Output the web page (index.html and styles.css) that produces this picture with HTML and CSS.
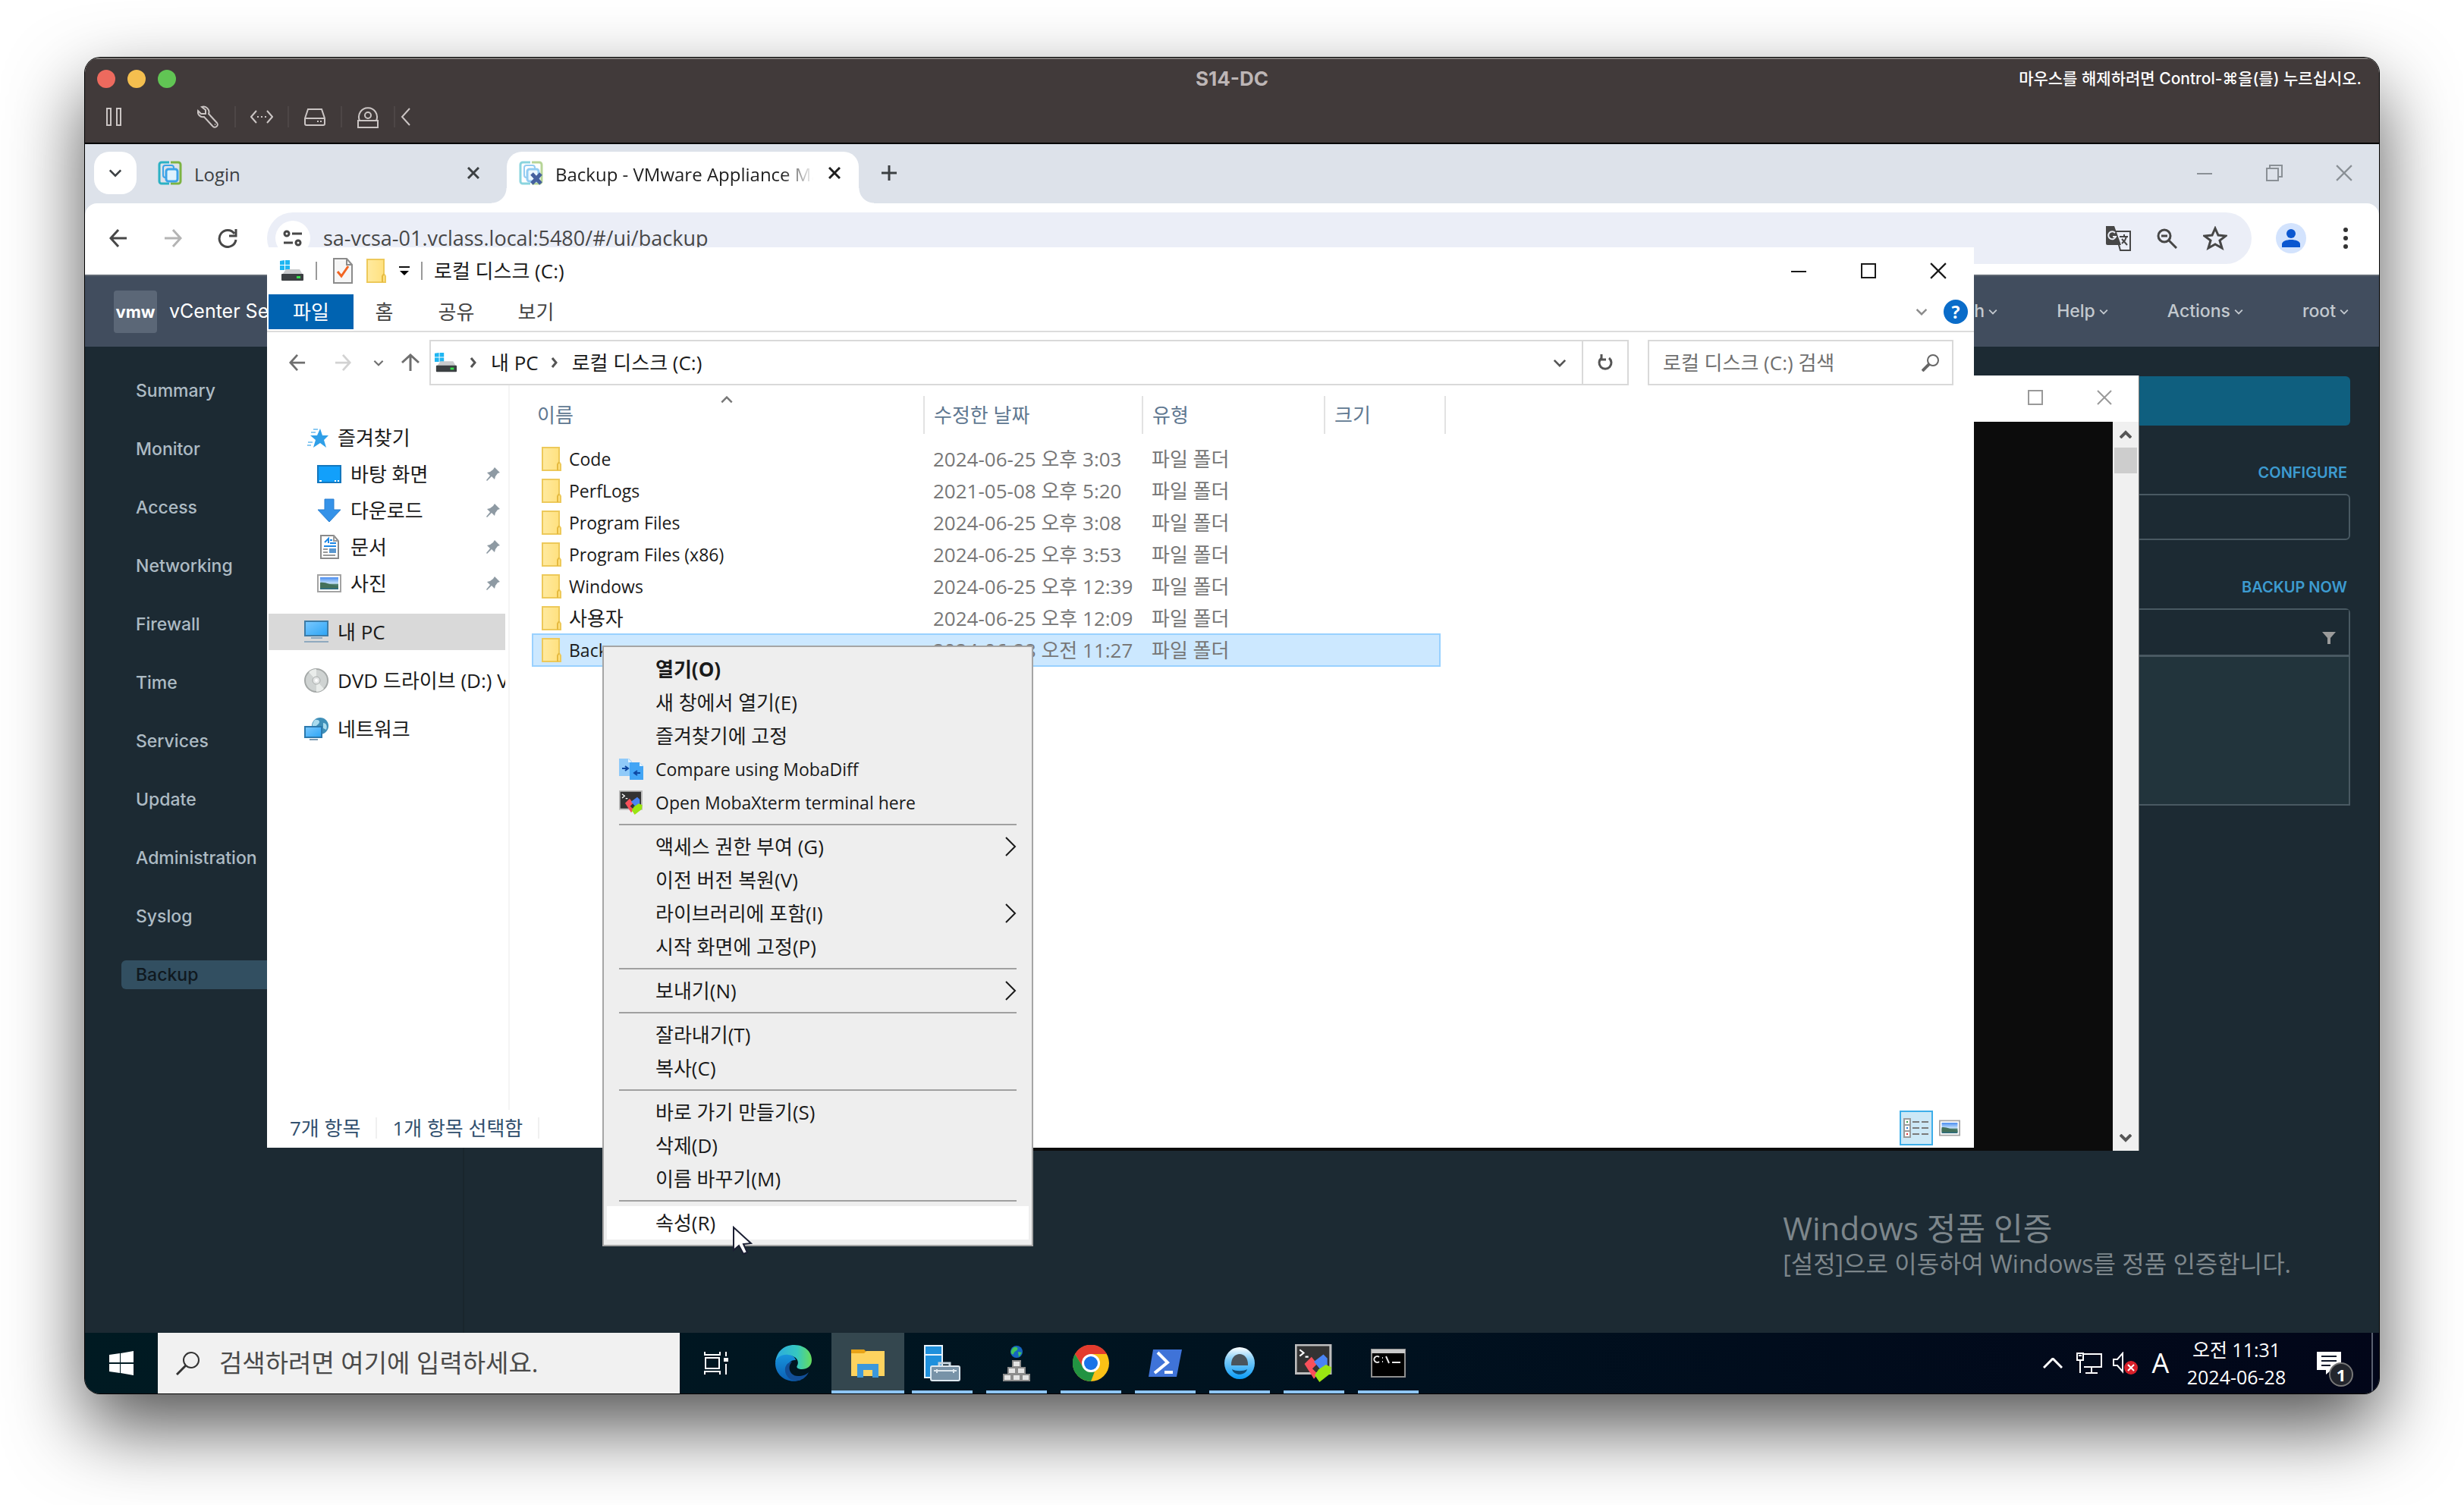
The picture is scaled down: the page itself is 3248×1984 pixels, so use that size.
FILE: index.html
```html
<!DOCTYPE html>
<html lang="ko">
<head>
    <meta charset="UTF-8">
    <meta name="viewport" content="width=device-width, initial-scale=1.0">
    <title>S14-DC</title>
    <link rel="stylesheet" href="styles.css">
</head>
<body>
    <!-- shared icons -->
    <svg class="defs" width="0" height="0" aria-hidden="true">
        <defs>
            <linearGradient id="g-folder" x1="0" y1="0" x2="1" y2="0"><stop offset="0" stop-color="#ffeaa0"/><stop offset="1" stop-color="#ffe07c"/></linearGradient>
            <linearGradient id="g-screen" x1="0" y1="0" x2="1" y2="1"><stop offset="0" stop-color="#7cc9ff"/><stop offset="1" stop-color="#2ba4f5"/></linearGradient>
            <linearGradient id="g-edge" x1="0" y1="0" x2="1" y2="0"><stop offset="0" stop-color="#2aa8e0"/><stop offset=".6" stop-color="#36c8c0"/><stop offset="1" stop-color="#66dc5c"/></linearGradient>
            <linearGradient id="g-edge2" x1="0" y1="0" x2="0" y2="1"><stop offset="0" stop-color="#1793dc"/><stop offset="1" stop-color="#0b5fb4"/></linearGradient>
            <linearGradient id="g-sky" x1="0" y1="0" x2="0" y2="1"><stop offset="0" stop-color="#4a8df0"/><stop offset=".5" stop-color="#c3e0fa"/><stop offset=".6" stop-color="#4f7f6c"/><stop offset="1" stop-color="#2c6a80"/></linearGradient>
            <linearGradient id="g-ring" x1="0" y1="0" x2="0" y2="1"><stop offset="0" stop-color="#ffffff"/><stop offset=".4" stop-color="#7ccbf8"/><stop offset="1" stop-color="#0a9cf8"/></linearGradient>
        </defs>
        <symbol id="close" viewBox="0 0 20 20"><path d="M1 1l18 18M19 1L1 19" fill="none" stroke="currentColor" stroke-width="2"/></symbol>
        <symbol id="tab-close" viewBox="0 0 16 16"><path d="M1 1l14 14M15 1L1 15" fill="none" stroke="currentColor" stroke-width="3"/></symbol>
        <symbol id="min" viewBox="0 0 20 20"><path d="M0 11h20" fill="none" stroke="currentColor" stroke-width="2"/></symbol>
        <symbol id="max" viewBox="0 0 20 20"><path d="M1 1h18v18H1z" fill="none" stroke="currentColor" stroke-width="2"/></symbol>
        <symbol id="down" viewBox="0 0 20 12"><path d="M2 2l8 8 8-8" fill="none" stroke="currentColor" stroke-width="3"/></symbol>
        <symbol id="crumb" viewBox="0 0 8 14"><path d="M1 1l5 6-5 6" fill="none" stroke="currentColor" stroke-width="3"/></symbol>
        <symbol id="next" viewBox="0 0 16 28"><path d="M2 2l12 12L2 26" fill="none" stroke="currentColor" stroke-width="2"/></symbol>
        <symbol id="arrow" viewBox="0 0 24 24"><path d="M23 12H2M12 1L2 12l10 11" fill="none" stroke="currentColor" stroke-width="3"/></symbol>
        <symbol id="search" viewBox="0 0 32 32"><circle cx="20" cy="12" r="10" fill="none" stroke="currentColor" stroke-width="2"/><path d="M13 19L1 31" stroke="currentColor" stroke-width="3"/></symbol>
        <symbol id="folder" viewBox="0 0 26 32"><path d="M1 1h22v19l2 3v8H1z" fill="url(#g-folder)" stroke="#edc95a" stroke-width="2"/><path d="M21 31v-8l2-3" fill="none" stroke="#e5b93f" stroke-width="2"/></symbol>
        <symbol id="drive" viewBox="0 0 32 28"><path d="M0 1l6-1v6H0zM7 0h6v6H7zM0 7h6v6H0zM7 7h6v6H7z" fill="#1fb6f2"/><path d="M8 12h18l4 7H3z" fill="#c9cbcd"/><rect x="2" y="18" width="29" height="9" rx="1" fill="#3b3f42"/><rect x="22" y="21" width="5" height="3" fill="#35e04c"/></symbol>
        <symbol id="vm" viewBox="0 0 32 32"><path d="M15 2H5a3 3 0 00-3 3v22a3 3 0 003 3h10" fill="none" stroke="#2bb1c4" stroke-width="3"/><path d="M17 2h10a3 3 0 013 3v22a3 3 0 01-3 3H17" fill="none" stroke="#7cb342" stroke-width="3"/><rect x="7" y="6" width="14" height="16" rx="3" fill="none" stroke="#3ba3e8" stroke-width="2"/><rect x="11" y="11" width="15" height="16" rx="3" fill="#dff2fd" stroke="#3ba3e8" stroke-width="3"/></symbol>
        <symbol id="pin" viewBox="0 0 20 20"><path d="M12 1l7 7-3 1-3 4-1 4-4-4-6 6-1-1 5-6-4-4 4-1 4-3z" fill="#8e9aa3"/></symbol>
        <symbol id="picture" viewBox="0 0 32 24"><path d="M1 1h30v22H1z" fill="#fff" stroke="#a3a3a3" stroke-width="2"/><path d="M4 4h24v16H4z" fill="url(#g-sky)"/><path d="M4 11c8-1 12 3 24 5v2H4z" fill="#43705a"/></symbol>
        <symbol id="moba" viewBox="0 0 48 48"><path d="M1 1h44v36H1z" fill="#333" stroke="#bdbdbd" stroke-width="3"/><path d="M6 7l5 4-5 4M13 16h4" fill="none" stroke="#fff" stroke-width="2"/><path d="M12 25l9-9 7 9-6 6 7 7-5 6z" fill="#f8505a"/><path d="M24 22l12-9 5 5v9l-9 5z" fill="#4a84f4"/><path d="M30 32l9-6 7 3-1 8-14 11-6-9z" fill="#9be512"/></symbol>
        <symbol id="pc" viewBox="0 0 32 30"><path d="M1 1h30v19H1z" fill="url(#g-screen)" stroke="#3d7ba6" stroke-width="2"/><path d="M9 23h15M0 28h32" stroke="#8fa9bf" stroke-width="2"/></symbol>
    </svg>

    <main class="vm">
        <header class="titlebar">
            <div class="titlebar-row">
                <div class="lights">
                    <button class="light red" aria-label="닫기"></button>
                    <button class="light yellow" aria-label="최소화"></button>
                    <button class="light green" aria-label="전체 화면"></button>
                </div>
                <h1>S14-DC</h1>
                <p class="hint">마우스를 해제하려면 Control-⌘을(를) 누르십시오.</p>
            </div>
            <div class="vm-tools">
                <button class="pause" aria-label="일시 중지"><svg width="20" height="24" viewBox="0 0 20 24"><path d="M1 1h5v22H1zM14 1h5v22h-5z"/></svg></button>
                <button class="tool first" aria-label="설정"><svg width="30" height="30" viewBox="0 0 30 30"><path d="M6 2l5 4v5H5L1 7c-1 5 3 9 8 8l11 12c3 4 9 0 6-4L15 11c2-5-3-11-9-9zM23 25h1"/></svg></button>
                <button class="tool" aria-label="네트워크"><svg width="30" height="18" viewBox="0 0 30 18"><path d="M8 1L1 9l7 8M22 1l7 8-7 8M9 9h2M14 9h2M19 9h2"/></svg></button>
                <button class="tool" aria-label="디스크"><svg width="28" height="24" viewBox="0 0 28 24"><path d="M1 14L5 2h18l4 12v7a2 2 0 01-2 2H3a2 2 0 01-2-2zM1 14h26M17 18h2M21 18h2"/></svg></button>
                <button class="tool" aria-label="CD"><svg width="28" height="30" viewBox="0 0 28 30"><path d="M3 20a12 12 0 1122 0M1 20h26v9H1z"/><circle cx="14" cy="13" r="4"/></svg></button>
                <button class="collapse" aria-label="접기"><svg width="14" height="24" viewBox="0 0 14 24"><path d="M12 1L2 12l10 11"/></svg></button>
            </div>
        </header>

        <div class="guest">
            <section class="chrome">
                <div class="tabstrip">
                    <button class="tab-search" aria-label="탭 검색"><svg width="18" height="12"><use href="#down"/></svg></button>
                    <div class="tab">
                        <svg width="32" height="32"><use href="#vm"/></svg>
                        <span>Login</span>
                        <button aria-label="탭 닫기"><svg width="16" height="16"><use href="#tab-close"/></svg></button>
                    </div>
                    <div class="tab active">
                        <svg width="32" height="32" viewBox="0 0 32 32"><g opacity=".55"><use href="#vm" width="32" height="32"/></g><path d="M17 17l12 13M29 17L17 30" stroke="#46619e" stroke-width="5"/></svg>
                        <span>Backup - VMware Appliance Management</span>
                        <button aria-label="탭 닫기"><svg width="16" height="16"><use href="#tab-close"/></svg></button>
                    </div>
                    <button class="new-tab" aria-label="새 탭"><svg width="22" height="22" viewBox="0 0 22 22"><path d="M11 1v20M1 11h20" stroke="currentColor" stroke-width="3"/></svg></button>
                    <div class="win-controls">
                        <button aria-label="최소화"><svg width="20" height="20"><use href="#min"/></svg></button>
                        <button aria-label="이전 크기로"><svg width="22" height="22" viewBox="0 0 22 22"><path d="M1 5h15v16H1zM5 5V1h16v15h-5" fill="none" stroke="currentColor" stroke-width="2"/></svg></button>
                        <button aria-label="닫기"><svg width="22" height="22"><use href="#close"/></svg></button>
                    </div>
                </div>

                <div class="toolbar">
                    <button aria-label="뒤로"><svg width="24" height="24"><use href="#arrow"/></svg></button>
                    <button class="off flip" aria-label="앞으로"><svg width="24" height="24"><use href="#arrow"/></svg></button>
                    <button aria-label="새로고침"><svg width="26" height="26" viewBox="0 0 26 26"><path d="M22 7a11 11 0 102 8M24 1v9h-9" fill="none" stroke="currentColor" stroke-width="3"/></svg></button>
                    <div class="omnibox">
                        <button class="site-info" aria-label="사이트 정보"><svg width="26" height="24" viewBox="0 0 26 24" fill="none" stroke="currentColor" stroke-width="3"><circle cx="5" cy="6" r="3"/><path d="M12 6h13M1 18h12"/><circle cx="20" cy="18" r="3"/></svg></button>
                        <input type="text" aria-label="주소" value="sa-vcsa-01.vclass.local:5480/#/ui/backup">
                        <button class="omni-icon" aria-label="번역"><svg width="34" height="34" viewBox="0 0 34 34"><path d="M13 8h20v25H20z" fill="none" stroke="#474747" stroke-width="2"/><path d="M1 1h11l9 25H3a2 2 0 01-2-2z" fill="#474747"/><path d="M13 10a5 5 0 101 5h-4" fill="none" stroke="#ebeef7" stroke-width="2"/><path d="M19 15h11M25 12v3M28 15c-1 5-4 7-6 9M22 18l7 8" fill="none" stroke="#474747" stroke-width="2"/></svg></button>
                        <button class="omni-icon" aria-label="축소"><svg width="28" height="28" viewBox="0 0 28 28" fill="none" stroke="currentColor" stroke-width="3"><circle cx="11" cy="11" r="8"/><path d="M17 17l10 10M7 11h8"/></svg></button>
                        <button class="omni-icon" aria-label="북마크"><svg width="32" height="32" viewBox="0 0 32 32"><path d="M16 3l4 9 10 1-8 6 3 10-9-5-9 5 3-10-8-6 10-1z" fill="none" stroke="currentColor" stroke-width="3"/></svg></button>
                    </div>
                    <button aria-label="프로필"><svg width="40" height="40" viewBox="0 0 40 40"><circle cx="20" cy="20" r="20" fill="#d3e3fd"/><circle cx="20" cy="14" r="6" fill="#0b57d0"/><path d="M8 32v-4c0-8 24-8 24 0v4z" fill="#0b57d0"/></svg></button>
                    <button aria-label="메뉴"><svg width="8" height="30" viewBox="0 0 8 30" fill="#333"><circle cx="4" cy="4" r="3"/><circle cx="4" cy="15" r="3"/><circle cx="4" cy="26" r="3"/></svg></button>
                </div>

                <div class="appliance">
                    <header class="vc-header">
                        <span class="logo">vmw</span>
                        <span class="product">vCenter Server</span>
                        <nav class="vc-menus">
                            <button>English<svg width="12" height="8"><use href="#down"/></svg></button>
                            <button>Help<svg width="12" height="8"><use href="#down"/></svg></button>
                            <button>Actions<svg width="12" height="8"><use href="#down"/></svg></button>
                            <button>root<svg width="12" height="8"><use href="#down"/></svg></button>
                        </nav>
                    </header>
                    <div class="vc-body">
                        <nav class="vc-nav">
                            <a href="#">Summary</a>
                            <a href="#">Monitor</a>
                            <a href="#">Access</a>
                            <a href="#">Networking</a>
                            <a href="#">Firewall</a>
                            <a href="#">Time</a>
                            <a href="#">Services</a>
                            <a href="#">Update</a>
                            <a href="#">Administration</a>
                            <a href="#">Syslog</a>
                            <a href="#" class="current">Backup</a>
                        </nav>
                        <section class="vc-content">
                            <div class="banner"></div>
                            <a href="#" class="action">CONFIGURE</a>
                            <div class="schedule"></div>
                            <a href="#" class="action">BACKUP NOW</a>
                            <div class="activity">
                                <div class="activity-head"><svg width="18" height="16" viewBox="0 0 18 16"><path d="M0 0h18l-7 8v8H7V8z" fill="#9b9b9b"/></svg></div>
                            </div>
                        </section>
                    </div>
                </div>
            </section>

            <div class="watermark">
                <p class="wm-title">Windows 정품 인증</p>
                <p>[설정]으로 이동하여 Windows를 정품 인증합니다.</p>
            </div>

            <section class="console">
                <div class="console-title">
                    <button aria-label="최대화"><svg width="20" height="20"><use href="#max"/></svg></button>
                    <button aria-label="닫기"><svg width="20" height="20"><use href="#close"/></svg></button>
                </div>
                <div class="console-body">
                    <div class="scrollbar">
                        <svg width="16" height="12" class="up" viewBox="0 0 16 12"><path d="M1 1l7 7 7-7" fill="none" stroke="currentColor" stroke-width="4"/></svg>
                        <div class="thumb"></div>
                        <svg width="16" height="12" class="dn" viewBox="0 0 16 12"><path d="M1 1l7 7 7-7" fill="none" stroke="currentColor" stroke-width="4"/></svg>
                    </div>
                </div>
            </section>

            <section class="explorer">
                <header class="ex-title">
                    <svg width="32" height="28"><use href="#drive"/></svg>
                    <i></i>
                    <svg class="qa" width="26" height="34" viewBox="0 0 26 34"><path d="M1 1h17l7 8v24H1z" fill="#f6f6f6" stroke="#8b8b8b" stroke-width="2"/><path d="M18 1v8h7" fill="none" stroke="#8b8b8b" stroke-width="2"/><path d="M6 18l5 6 9-13" fill="none" stroke="#f26522" stroke-width="3"/></svg>
                    <svg width="26" height="32"><use href="#folder"/></svg>
                    <svg width="14" height="12" viewBox="0 0 14 12"><path d="M0 1h14" stroke="#111" stroke-width="2"/><path d="M1 6h12l-6 6z"/></svg>
                    <i></i>
                    <h2>로컬 디스크 (C:)</h2>
                    <div class="win-controls">
                        <button aria-label="최소화"><svg width="20" height="20"><use href="#min"/></svg></button>
                        <button aria-label="최대화"><svg width="20" height="20"><use href="#max"/></svg></button>
                        <button aria-label="닫기"><svg width="22" height="22"><use href="#close"/></svg></button>
                    </div>
                </header>
                <div class="ribbon">
                    <button class="file">파일</button>
                    <button>홈</button>
                    <button>공유</button>
                    <button>보기</button>
                    <span class="ribbon-right">
                        <svg width="16" height="10"><use href="#down"/></svg>
                        <button class="help">?</button>
                    </span>
                </div>
                <div class="address">
                    <button class="nav-btn" aria-label="뒤로"><svg width="24" height="22"><use href="#arrow"/></svg></button>
                    <button class="nav-btn off flip" aria-label="앞으로"><svg width="24" height="22"><use href="#arrow"/></svg></button>
                    <button class="nav-btn recent" aria-label="최근 위치"><svg width="14" height="9"><use href="#down"/></svg></button>
                    <button class="nav-btn up" aria-label="위로"><svg width="24" height="24"><use href="#arrow"/></svg></button>
                    <div class="path">
                        <svg width="30" height="28"><use href="#drive"/></svg>
                        <svg class="crumb" width="8" height="14"><use href="#crumb"/></svg>
                        <span>내 PC</span>
                        <svg class="crumb" width="8" height="14"><use href="#crumb"/></svg>
                        <span>로컬 디스크 (C:)</span>
                        <button class="path-drop" aria-label="이전 위치"><svg width="18" height="11"><use href="#down"/></svg></button>
                        <button class="refresh" aria-label="새로 고침"><svg width="24" height="22" viewBox="0 0 24 22"><path d="M7 5a8 8 0 1010 0M7 0v7h6" fill="none" stroke="currentColor" stroke-width="3"/></svg></button>
                    </div>
                    <div class="ex-search">
                        <input type="text" aria-label="검색" placeholder="로컬 디스크 (C:) 검색">
                        <svg width="24" height="24" viewBox="0 0 24 24"><circle cx="15" cy="9" r="7" fill="none" stroke="currentColor" stroke-width="2"/><path d="M10 14l-9 9" stroke="currentColor" stroke-width="4"/></svg>
                    </div>
                </div>

                <div class="ex-body">
                    <nav class="tree">
                        <a href="#"><svg width="28" height="28" viewBox="0 0 28 28"><path d="M17 2l3 9h8l-6 6 3 10-8-6-9 6 3-10-7-6h9z" fill="#2f9fe8"/><path d="M8 3h6M5 7h6M1 20h6M0 24h5" stroke="#8ccaf2" stroke-width="2"/></svg>즐겨찾기</a>
                        <a href="#" class="sub"><svg width="32" height="24" viewBox="0 0 32 24"><path d="M1 1h30v22H1z" fill="#12a0fb" stroke="#1477bd" stroke-width="2"/><path d="M3 21h3M23 21h2M27 21h2" stroke="#fff" stroke-width="2"/></svg>바탕 화면<svg class="pin" width="20" height="20"><use href="#pin"/></svg></a>
                        <a href="#" class="sub"><svg width="32" height="32" viewBox="0 0 32 32"><path d="M10 1h12v14h9L16 31 1 15h9z" fill="#3592e8" stroke="#2a7fd0"/></svg>다운로드<svg class="pin" width="20" height="20"><use href="#pin"/></svg></a>
                        <a href="#" class="sub"><svg width="32" height="32" viewBox="0 0 32 32"><path d="M5 1h17l6 7v23H5z" fill="#fff" stroke="#8a8a8a" stroke-width="2"/><path d="M22 1v7h6M8 19h6M8 23h6M8 27h16" fill="none" stroke="#9a9a9a" stroke-width="2"/><path d="M9 15h16M10 10l5-5v6M17 7h3M17 11h8" fill="none" stroke="#1e88e5" stroke-width="2"/><path d="M16 18h9v6h-9z" fill="#5a97cf"/></svg>문서<svg class="pin" width="20" height="20"><use href="#pin"/></svg></a>
                        <a href="#" class="sub"><svg width="32" height="24"><use href="#picture"/></svg>사진<svg class="pin" width="20" height="20"><use href="#pin"/></svg></a>
                        <a href="#" class="root here"><svg width="32" height="30"><use href="#pc"/></svg>내 PC</a>
                        <a href="#" class="root"><svg width="32" height="32" viewBox="0 0 32 32"><circle cx="16" cy="16" r="15" fill="#cfd3d2" stroke="#a4a8a7" stroke-width="2"/><path d="M16 16L6 5a15 15 0 0110-4zM16 16l10 11a15 15 0 01-10 4z" fill="#e9ecea"/><circle cx="16" cy="16" r="5" fill="#e4e6e6" stroke="#a8acab"/><circle cx="16" cy="16" r="2" fill="#fff"/></svg>DVD 드라이브 (D:) VMware Tools</a>
                        <a href="#" class="root"><svg width="32" height="32" viewBox="0 0 32 32"><circle cx="21" cy="12" r="11" fill="#3f8fb8"/><path d="M14 4c6-1 8 3 4 6s-3 5-6 4 0-8 2-10zM25 8c4 0 6 4 4 9l-4-2z" fill="#a9dbee"/><path d="M1 13h22v14H1z" fill="url(#g-screen)" stroke="#2c79ad" stroke-width="2"/><path d="M7 30h11" stroke="#7f9cb3" stroke-width="2"/></svg>네트워크</a>
                    </nav>
                    <div class="files">
                        <table>
                            <colgroup><col class="c-name"><col class="c-date"><col class="c-type"><col class="c-size"></colgroup>
                            <thead>
                                <tr>
                                    <th>이름<svg class="sort" width="18" height="10"><use href="#down"/></svg></th>
                                    <th>수정한 날짜</th>
                                    <th>유형</th>
                                    <th>크기</th>
                                </tr>
                            </thead>
                            <tbody>
                                <tr><td><svg width="26" height="32"><use href="#folder"/></svg><span class="latin">Code</span></td><td>2024-06-25 오후 3:03</td><td>파일 폴더</td><td></td></tr>
                                <tr><td><svg width="26" height="32"><use href="#folder"/></svg><span class="latin">PerfLogs</span></td><td>2021-05-08 오후 5:20</td><td>파일 폴더</td><td></td></tr>
                                <tr><td><svg width="26" height="32"><use href="#folder"/></svg><span class="latin">Program Files</span></td><td>2024-06-25 오후 3:08</td><td>파일 폴더</td><td></td></tr>
                                <tr><td><svg width="26" height="32"><use href="#folder"/></svg><span class="latin">Program Files (x86)</span></td><td>2024-06-25 오후 3:53</td><td>파일 폴더</td><td></td></tr>
                                <tr><td><svg width="26" height="32"><use href="#folder"/></svg><span class="latin">Windows</span></td><td>2024-06-25 오후 12:39</td><td>파일 폴더</td><td></td></tr>
                                <tr><td><svg width="26" height="32"><use href="#folder"/></svg>사용자</td><td>2024-06-25 오후 12:09</td><td>파일 폴더</td><td></td></tr>
                                <tr class="selected"><td><svg width="26" height="32"><use href="#folder"/></svg><span class="latin">Backup</span></td><td>2024-06-28 오전 11:27</td><td>파일 폴더</td><td></td></tr>
                            </tbody>
                        </table>
                    </div>
                </div>
                <footer class="ex-status">
                    <span>7개 항목</span>
                    <span>1개 항목 선택함</span>
                    <button class="view details" aria-label="자세히"><svg width="34" height="26" viewBox="0 0 34 26"><path d="M1 1h8v24H1zM1 9h8M1 17h8" fill="#fff" stroke="#9a9a9a" stroke-width="2"/><path d="M12 5h9M24 5h9M12 13h9M24 13h9M12 21h9M24 21h9" stroke="#7a7a7a" stroke-width="2"/><path d="M4 5h2" stroke="#3a9b4a" stroke-width="2"/><path d="M4 13h2" stroke="#2b7cd3" stroke-width="2"/><path d="M4 21h2" stroke="#d33" stroke-width="2"/></svg></button>
                    <button class="view" aria-label="큰 아이콘"><svg width="28" height="22"><use href="#picture"/></svg></button>
                </footer>
            </section>

            <menu class="context">
                <li><button class="default">열기(O)</button></li>
                <li><button>새 창에서 열기(E)</button></li>
                <li><button>즐겨찾기에 고정</button></li>
                <li><button class="latin"><svg class="mi" width="32" height="30" viewBox="0 0 32 30"><path d="M0 1h13l4 4v19H0z" fill="#90caf9"/><path d="M14 6h13l5 5v18H14z" fill="#42a5f5"/><path d="M27 6v5h5M12 1v5h5" fill="#e3f2fd"/><path d="M4 14h7M8 11l4 3-4 3M28 20h-7M24 17l-4 3 4 3" fill="none" stroke="#0d47a1" stroke-width="2"/></svg>Compare using MobaDiff</button></li>
                <li><button class="latin"><svg class="mi" width="32" height="32"><use href="#moba"/></svg>Open MobaXterm terminal here</button></li>
                <li class="sep"></li>
                <li><button>액세스 권한 부여 (G)<svg class="more" width="16" height="28"><use href="#next"/></svg></button></li>
                <li><button>이전 버전 복원(V)</button></li>
                <li><button>라이브러리에 포함(I)<svg class="more" width="16" height="28"><use href="#next"/></svg></button></li>
                <li><button>시작 화면에 고정(P)</button></li>
                <li class="sep"></li>
                <li><button>보내기(N)<svg class="more" width="16" height="28"><use href="#next"/></svg></button></li>
                <li class="sep"></li>
                <li><button>잘라내기(T)</button></li>
                <li><button>복사(C)</button></li>
                <li class="sep"></li>
                <li><button>바로 가기 만들기(S)</button></li>
                <li><button>삭제(D)</button></li>
                <li><button>이름 바꾸기(M)</button></li>
                <li class="sep"></li>
                <li><button class="hover">속성(R)</button></li>
            </menu>

            <svg class="cursor" width="26" height="38" viewBox="0 0 26 38"><path d="M1 2v30l7-6 6 11 5-2-5-11 10-1z" fill="#fff" stroke="#1b1f33" stroke-width="2"/></svg>

            <footer class="taskbar">
                <button class="start" aria-label="시작"><svg width="32" height="32" viewBox="0 0 32 32" fill="#fff"><path d="M0 5l14-2v12H0zM15 3l17-3v15H15zM0 17h14v12L0 27zM15 17h17v15l-17-3z"/></svg></button>
                <div class="task-search">
                    <svg width="32" height="32"><use href="#search"/></svg>
                    <input type="text" aria-label="작업 표시줄 검색" placeholder="검색하려면 여기에 입력하세요.">
                </div>
                <button class="task-view" aria-label="작업 보기"><svg width="34" height="32" viewBox="0 0 34 32" fill="none" stroke="#fff" stroke-width="2"><path d="M2 1v4h20V1M2 31v-4h20v4M3 9h18v14H3zM30 1v6M30 17v14"/><path d="M27 9h6v5h-6z" fill="#fff" stroke="none"/></svg></button>
                <div class="apps">
                    <button aria-label="Edge"><svg width="48" height="48" viewBox="0 0 48 48"><path d="M0 24C1 9 11 0 25 0c14 0 23 9 23 20 0 8-6 12-13 12-5 0-8-2-6-5 3-6-2-13-11-13C9 14 2 18 0 24z" fill="url(#g-edge)"/><path d="M0 24c1-8 9-12 17-11 5 0 9 3 10 7-7-1-11 5-10 11 1 9 9 15 17 15C18 52 0 42 0 24z" fill="url(#g-edge2)"/><path d="M22 22c-7 7-3 19 8 19 6 0 11-2 14-5-5 10-14 13-23 10-11-6-11-22 1-24z" fill="#124e97"/></svg></button>
                    <button class="open focus" aria-label="파일 탐색기"><svg width="44" height="38" viewBox="0 0 44 38"><path d="M0 1h17l4 4v6H0z" fill="#e8a317"/><path d="M0 6h17l3-3h24v33H0z" fill="#fdd35f"/><path d="M8 38V20h28v18h-8V28H16v10z" fill="#3c98dc"/></svg></button>
                    <button class="open" aria-label="서버 관리자"><svg width="48" height="48" viewBox="0 0 48 48"><path d="M1 1h23v42H1z" fill="#1e90dc" stroke="#e8f3fb" stroke-width="2"/><path d="M1 13h23" stroke="#e8f3fb" stroke-width="2"/><path d="M20 28v-4h14v4" fill="none" stroke="#c6d4de" stroke-width="3"/><rect x="9" y="28" width="38" height="19" rx="2" fill="#7893a8" stroke="#dde7ee" stroke-width="2"/><path d="M13 34h30M17 32v5M39 32v5" stroke="#dde7ee" stroke-width="2"/></svg></button>
                    <button class="open" aria-label="도메인 관리"><svg width="36" height="48" viewBox="0 0 36 48"><circle cx="18" cy="9" r="8" fill="#1565c0"/><path d="M15 3c5-1 6 3 2 5s-2 6-5 4 0-8 3-9zM20 9l5 1-4 6z" fill="#43c45a"/><path d="M13 21h10v8H13zM7 30h10v8H7zM19 30h10v8H19zM1 39h10v8H1zM13 39h10v8H13zM25 39h10v8H25z" fill="#e4e4e4" stroke="#8c8c8c" stroke-width="2"/></svg></button>
                    <button class="open" aria-label="Chrome"><svg width="48" height="48" viewBox="0 0 48 48"><circle cx="24" cy="24" r="24" fill="#fbc116"/><path d="M3 12A24 24 0 0145 12H24L14 30z" fill="#e33b2e"/><path d="M3 12l11 18a12 12 0 0015 5L24 48A24 24 0 013 12z" fill="#229342"/><circle cx="24" cy="24" r="12" fill="#fff"/><circle cx="24" cy="24" r="9" fill="#1a73e8"/></svg></button>
                    <button class="open" aria-label="PowerShell"><svg width="46" height="38" viewBox="0 0 46 38"><path d="M7 1h38l-7 36H1z" fill="#3f73d8"/><path d="M13 5l13 13L9 32M22 31h11" fill="none" stroke="#fff" stroke-width="4"/></svg></button>
                    <button class="open" aria-label="원격 도구"><svg width="40" height="42" viewBox="0 0 40 42"><ellipse cx="20" cy="21" rx="20" ry="21" fill="url(#g-ring)"/><path d="M9 24c-1-20 23-20 22 0z" fill="#4a545c"/><path d="M10 29c5 3 15 3 20 0-2 9-18 9-20 0z" fill="#124b73"/></svg></button>
                    <button class="open" aria-label="MobaXterm"><svg width="50" height="50"><use href="#moba"/></svg></button>
                    <button class="open" aria-label="명령 프롬프트"><svg width="46" height="38" viewBox="0 0 46 38"><path d="M1 1h44v36H1z" fill="#000" stroke="#8f8f8f" stroke-width="2"/><path d="M1 1h44v5H1z" fill="#c9c9c9"/><path d="M11 11a4 4 0 100 6M15 12h1M15 17h1M20 10l4 9M28 18h11" fill="none" stroke="#e8e8e8" stroke-width="2"/></svg></button>
                </div>
                <div class="tray">
                    <button aria-label="숨겨진 아이콘"><svg width="26" height="14" viewBox="0 0 26 14"><path d="M1 13L13 1l12 12" fill="none" stroke="currentColor" stroke-width="3"/></svg></button>
                    <button aria-label="네트워크"><svg width="34" height="28" viewBox="0 0 34 28" fill="none" stroke="currentColor" stroke-width="2"><path d="M8 2h25v17H10M20 19v8M12 27h16M1 1h8v9H1zM5 10v17M3 4h4"/></svg></button>
                    <button aria-label="음소거"><svg width="34" height="30" viewBox="0 0 34 30"><path d="M1 10h5l7-8v24l-7-8H1z" fill="none" stroke="currentColor" stroke-width="2"/><circle cx="24" cy="21" r="9" fill="#d9202a"/><path d="M20 17l8 8M28 17l-8 8" stroke="#fff" stroke-width="2"/></svg></button>
                    <button class="ime">A</button>
                    <button class="clock"><span>오전 11:31</span><span>2024-06-28</span></button>
                    <button class="notice" aria-label="알림"><svg width="34" height="32" viewBox="0 0 34 32"><path d="M1 1h32v24H20l-7 6v-6H1z" fill="#fff"/><path d="M7 7h20M7 13h20M7 19h12" stroke="#10182a" stroke-width="2"/></svg><b>1</b></button>
                    <button class="peek" aria-label="바탕 화면 보기"></button>
                </div>
            </footer>
        </div>
    </main>
</body>
</html>
```
FILE: styles.css
```css
* {
    box-sizing: border-box;
}
body {
    display: flex;
    min-height: 100vh;
    margin: 0;
    padding: 76px 112px 147px;
    background: #fff;
    font-family: "Open Sans", "Noto Sans CJK KR", sans-serif;
    font-size: 26px;
    line-height: 1.4;
    color: #1a1a1a;
    overflow: hidden;
}
h1, h2, p, menu {
    margin: 0;
    padding: 0;
    font-weight: 400;
}
button, input {
    font: inherit;
    color: inherit;
    border: none;
    background: none;
    padding: 0;
    margin: 0;
}
button {
    display: flex;
    align-items: center;
    justify-content: center;
    flex-shrink: 0;
}
input {
    outline: none;
    min-width: 0;
}
a {
    color: inherit;
    text-decoration: none;
}
svg {
    display: block;
    flex-shrink: 0;
}
.defs {
    position: absolute;
}
.latin {
    font-size: 23px;
}

/* host window */
.vm {
    flex: 1;
    display: flex;
    flex-direction: column;
    min-width: 0;
    border-radius: 20px;
    overflow: hidden;
    box-shadow: 0 0 0 1px #000, 0 44px 100px rgba(0, 0, 0, 0.68);
}
.titlebar {
    background: #413a3a;
    border-top: 2px solid #7d7977;
    border-bottom: 2px solid #000;
    padding-bottom: 12px;
}
.titlebar-row {
    display: grid;
    grid-template-columns: 1fr auto 1fr;
    align-items: center;
    height: 52px;
    padding: 0 16px;
}
.lights {
    display: flex;
    gap: 16px;
}
.light {
    width: 24px;
    height: 24px;
    border-radius: 50%;
}
.red { background: #ed6a5e; }
.yellow { background: #f4bf4f; }
.green { background: #61c554; }
.titlebar h1 {
    font-family: Inter, sans-serif;
    font-size: 26px;
    font-weight: 700;
    line-height: 32px;
    color: #bdb6b6;
}
.hint {
    justify-self: end;
    padding-right: 7px;
    font-family: Inter, "Noto Sans CJK KR", sans-serif;
    font-size: 21px;
    font-weight: 500;
    line-height: 28px;
    color: #fff;
}
.vm-tools {
    display: flex;
    align-items: center;
    height: 44px;
    margin-top: 2px;
    padding-left: 18px;
}
.vm-tools svg {
    fill: none;
    stroke: #cbc5c4;
    stroke-width: 2;
}
.pause {
    width: 40px;
}
.tool {
    width: 70px;
    height: 28px;
    border-right: 2px solid #4d4646;
}
.tool.first {
    margin-left: 71px;
}
.collapse {
    width: 28px;
}
.guest {
    flex: 1;
    display: flex;
    flex-direction: column;
    position: relative;
    background: #1c2a33;
}

/* browser */
.chrome {
    flex: 1;
    display: flex;
    flex-direction: column;
    background: #dde2ea;
}
.tabstrip {
    display: flex;
    gap: 12px;
    height: 78px;
    padding: 10px 0 0 12px;
    font-size: 24px;
    color: #3c4043;
}
.tab-search {
    width: 56px;
    height: 56px;
    border-radius: 20px;
    background: #fff;
}
.tab {
    display: flex;
    align-items: center;
    gap: 16px;
    width: 464px;
    height: 56px;
    padding: 0 20px 0 16px;
}
.tab span {
    flex: 1;
    padding-top: 4px;
    overflow: hidden;
    white-space: nowrap;
}
.tab button {
    width: 24px;
}
.tab.active {
    position: relative;
    height: 68px;
    padding-bottom: 12px;
    border-radius: 20px 20px 0 0;
    background: #fff;
    color: #1f1f1f;
}
.tab.active::before,
.tab.active::after {
    content: "";
    position: absolute;
    bottom: 0;
    width: 20px;
    height: 20px;
}
.tab.active::before {
    left: -20px;
    background: radial-gradient(circle at 0 0, transparent 19px, #fff 20px);
}
.tab.active::after {
    right: -20px;
    background: radial-gradient(circle at 100% 0, transparent 19px, #fff 20px);
}
.tab.active span {
    mask-image: linear-gradient(to right, #000 88%, transparent);
}
.new-tab {
    width: 56px;
    height: 56px;
}
.win-controls {
    display: flex;
    margin-left: auto;
}
.win-controls button {
    width: 92px;
    height: 56px;
}
.tabstrip .win-controls {
    color: #8a9096;
}
.toolbar {
    display: flex;
    align-items: center;
    padding: 12px 8px 14px;
    border-radius: 16px 16px 0 0;
    background: #fff;
    color: #474747;
}
.toolbar > button {
    width: 72px;
}
.toolbar .off {
    color: #b4b4b4;
}
.flip svg {
    transform: scaleX(-1);
}
.omnibox {
    flex: 1;
    display: flex;
    align-items: center;
    height: 68px;
    margin: 0 16px;
    padding: 0 16px 0 11px;
    border-radius: 34px;
    background: #ebeef7;
}
.site-info {
    width: 46px;
    height: 46px;
    border-radius: 50%;
    background: #fff;
}
.omnibox input {
    flex: 1;
    margin-left: 17px;
    font-size: 27px;
}
.omni-icon {
    width: 64px;
}

/* appliance management */
.appliance {
    flex: 1;
    display: flex;
    flex-direction: column;
    background: #1c2a33;
    font-family: Inter, sans-serif;
    font-size: 23px;
    color: #adbbc4;
}
.vc-header {
    display: flex;
    align-items: center;
    gap: 16px;
    height: 95px;
    padding: 0 40px 0 38px;
    border-top: 2px solid #5f6873;
    background: #414d5e;
}
.logo {
    width: 57px;
    height: 56px;
    border-radius: 4px;
    background: #5b6777;
    color: #fff;
    font-size: 22px;
    font-weight: 700;
    line-height: 56px;
    text-align: center;
}
.product {
    font-size: 25px;
    color: #fff;
}
.vc-menus {
    display: flex;
    gap: 78px;
    margin-left: auto;
    font-weight: 500;
    color: #c3c9cf;
}
.vc-menus svg {
    margin-left: 5px;
}
.vc-body {
    flex: 1;
    display: flex;
}
.vc-nav {
    width: 500px;
    padding: 39px 0 0 48px;
    border-right: 2px solid #19252d;
    font-weight: 500;
}
.vc-nav a {
    display: block;
    margin-bottom: 39px;
    padding-left: 19px;
    border-radius: 6px 0 0 6px;
    line-height: 38px;
}
.vc-nav .current {
    background: #324f61;
    color: #10191f;
}
.vc-content {
    flex: 1;
    display: flex;
    flex-direction: column;
    padding: 39px 38px 0 24px;
}
.banner {
    height: 65px;
    border-radius: 6px;
    background: #0f5f7f;
}
.action {
    align-self: flex-end;
    margin: 47px 4px 13px 0;
    font-size: 20px;
    font-weight: 600;
    line-height: 30px;
    color: #3d9bd0;
}
.schedule {
    height: 61px;
    border: 2px solid #495962;
    border-radius: 6px;
}
.activity {
    height: 260px;
    border: 2px solid #495962;
    border-radius: 6px 6px 0 0;
    background: #22343c;
}
.activity-head {
    display: flex;
    justify-content: flex-end;
    height: 62px;
    padding: 29px 17px 0 0;
    border-bottom: 3px solid #495962;
    background: #1c2a33;
}
.watermark {
    position: absolute;
    right: 116px;
    bottom: 149px;
    font-size: 32px;
    font-weight: 300;
    line-height: 44px;
    color: #7d868b;
}
.wm-title {
    font-size: 42px;
    line-height: 50px;
}

/* windows on the guest desktop */
.console {
    position: absolute;
    top: 305px;
    right: 316px;
    bottom: 320px;
    left: 1000px;
    display: flex;
    flex-direction: column;
    background: #fff;
    border-right: 1px solid #777;
}
.console-title {
    display: flex;
    justify-content: flex-end;
    height: 61px;
    color: #999;
}
.console-title button {
    width: 91px;
    height: 58px;
}
.console-body {
    flex: 1;
    display: flex;
    justify-content: flex-end;
    background: #0c0c0c;
}
.scrollbar {
    display: flex;
    flex-direction: column;
    align-items: center;
    width: 34px;
    padding: 10px 0;
    background: #f0f0f0;
    color: #555;
}
.scrollbar .up {
    transform: scaleY(-1);
}
.scrollbar .dn {
    margin-top: auto;
}
.thumb {
    width: 30px;
    height: 34px;
    margin-top: 12px;
    background: #cdcdcd;
}
.explorer {
    position: absolute;
    top: 136px;
    right: 534px;
    bottom: 324px;
    left: 240px;
    display: flex;
    flex-direction: column;
    background: #fff;
}
.ex-title {
    display: flex;
    align-items: center;
    height: 62px;
    padding-left: 17px;
}
.ex-title i {
    width: 2px;
    height: 24px;
    margin: 0 15px;
    background: #9a9a9a;
}
.ex-title .qa {
    margin: 0 18px 0 6px;
}
.ex-title svg + svg + svg {
    margin-left: 17px;
}
.ex-title h2 {
    font-size: 26px;
}
.ex-title .win-controls {
    margin-right: 1px;
}
.ribbon {
    display: flex;
    height: 50px;
    padding: 0 8px 2px 2px;
    border-bottom: 2px solid #dcdcdc;
    color: #444;
}
.ribbon button {
    width: 95px;
}
.ribbon .file {
    width: 112px;
    margin-right: -7px;
    background: #0063b1;
    color: #fff;
}
.ribbon > button:nth-child(4) {
    margin-left: 10px;
}
.ribbon-right {
    display: flex;
    align-items: center;
    gap: 21px;
    margin-left: auto;
    color: #8c8c8c;
}
.ribbon-right .help {
    width: 32px;
    height: 32px;
    border-radius: 50%;
    background: #0a6cc9;
    color: #fff;
    font-size: 23px;
    font-weight: 700;
}
.address {
    display: flex;
    height: 70px;
    padding: 10px 27px 0 10px;
}
.nav-btn {
    width: 60px;
    color: #6f6f6f;
}
.nav-btn.off {
    color: #d2d2d2;
}
.nav-btn.recent {
    width: 34px;
}
.nav-btn.up {
    width: 50px;
}
.up svg {
    transform: rotate(90deg);
}
.path {
    flex: 1;
    display: flex;
    align-items: center;
    border: 2px solid #d9d9d9;
}
.path > svg:first-child {
    margin-left: 5px;
}
.crumb {
    margin: 0 19px 0 17px;
    color: #555;
}
.path-drop {
    width: 58px;
    margin-left: auto;
    color: #555;
}
.refresh {
    width: 60px;
    height: 100%;
    border-left: 2px solid #d9d9d9;
    color: #555;
}
.ex-search {
    display: flex;
    align-items: center;
    width: 403px;
    margin-left: 25px;
    padding: 0 16px 0 18px;
    border: 2px solid #d9d9d9;
    color: #666;
}
.ex-search input {
    flex: 1;
}
.ex-search input::placeholder {
    color: #707070;
    opacity: 1;
}
.ex-body {
    flex: 1;
    display: flex;
    min-height: 0;
}
.tree {
    width: 320px;
    padding: 45px 4px 0 2px;
    border-right: 2px solid #f4f4f4;
}
.tree a {
    display: flex;
    align-items: center;
    gap: 12px;
    height: 48px;
    padding-left: 51px;
    overflow: hidden;
    white-space: nowrap;
}
.tree .sub {
    padding-left: 64px;
}
.tree .root {
    margin-top: 16px;
    padding-left: 47px;
}
.tree .here {
    background: #d9d9d9;
}
.tree .pin {
    margin: 0 6px 0 auto;
}
.files {
    flex: 1;
    padding: 14px 0 0 30px;
}
table {
    table-layout: fixed;
    width: 1196px;
    border-collapse: collapse;
}
.c-name { width: 516px; }
.c-date { width: 288px; }
.c-type { width: 240px; }
.c-size { width: 152px; }
th {
    position: relative;
    height: 50px;
    padding: 0 0 0 12px;
    border-right: 2px solid #e2e2e2;
    font-weight: 400;
    text-align: left;
    color: #5f7891;
}
th:first-child {
    padding-left: 6px;
}
/* the last divider stands past the end of the rows */
th:last-child {
    border-right: none;
}
th:last-child::after {
    content: "";
    position: absolute;
    top: 0;
    right: -8px;
    bottom: 0;
    width: 2px;
    background: #e2e2e2;
}
.sort {
    position: absolute;
    top: 0;
    left: 48%;
    transform: scaleY(-1);
    color: #777;
}
tbody::before {
    content: "";
    display: block;
    height: 12px;
}
td {
    height: 42px;
    padding: 0 0 0 12px;
    line-height: 40px;
    color: #777;
}
td:first-child {
    display: flex;
    align-items: center;
    gap: 10px;
    padding-left: 12px;
    color: #1a1a1a;
}
.selected {
    background: #cce8ff;
    outline: 2px solid #99d1ff;
    outline-offset: -1px;
}
.ex-status {
    display: flex;
    align-items: center;
    gap: 20px;
    height: 50px;
    padding: 0 14px 2px 30px;
    color: #32506e;
}
.ex-status span {
    padding-right: 20px;
    border-right: 2px solid #f0f0f0;
    line-height: 28px;
}
.view {
    width: 36px;
    height: 46px;
    margin-left: -16px;
}
.view.details {
    width: 44px;
    margin-left: auto;
    border: 2px solid #3daee9;
    background: #cce8f6;
}

/* context menu */
.context {
    position: absolute;
    top: 661px;
    left: 682px;
    width: 568px;
    padding: 7px 4px;
    border: 2px solid #a5a5a5;
    background: #eee;
    list-style: none;
}
.context button {
    position: relative;
    justify-content: flex-start;
    width: 100%;
    height: 44px;
    padding: 0 16px 0 64px;
}
.context .default {
    font-weight: 700;
}
.context .hover {
    background: #fff;
}
.context .mi {
    position: absolute;
    left: 16px;
}
.context .more {
    margin-left: auto;
}
.sep {
    height: 14px;
    margin: 0 16px;
    border-top: 6px solid #eee;
    border-bottom: 6px solid #eee;
    background: #a0a0a0;
}
.cursor {
    position: absolute;
    top: 1426px;
    left: 854px;
}

/* taskbar */
.taskbar {
    display: flex;
    height: 80px;
    background: linear-gradient(to right, #001a22, #001320 50%, #020619);
    color: #fff;
}
.start, .task-view {
    width: 96px;
}
.task-search {
    display: flex;
    align-items: center;
    gap: 25px;
    width: 688px;
    padding-left: 24px;
    background: #f1f1f1;
    color: #333;
}
.task-search input {
    flex: 1;
    font-size: 33px;
}
.task-search input::placeholder {
    color: #4a4a4a;
    opacity: 1;
}
.apps {
    display: flex;
    gap: 2px;
    margin-left: 6px;
}
.apps button {
    position: relative;
    width: 96px;
}
.apps .open::after {
    content: "";
    position: absolute;
    right: 8px;
    bottom: 0;
    left: 8px;
    height: 4px;
    background: #8ec5f5;
}
.apps .focus {
    background: #34474f;
}
.apps .focus::after {
    right: 0;
    left: 0;
}
.tray {
    display: flex;
    margin-left: auto;
}
.tray button {
    width: 48px;
}
.tray .ime {
    width: 44px;
    font-size: 36px;
}
.tray .clock {
    flex-direction: column;
    width: 156px;
    font-size: 25px;
    line-height: 36px;
}
.tray .notice {
    position: relative;
    width: 100px;
    padding-right: 12px;
}
.notice b {
    position: absolute;
    top: 39px;
    left: 44px;
    width: 32px;
    height: 32px;
    border: 2px solid #777;
    border-radius: 50%;
    background: #23262d;
    font-size: 22px;
    line-height: 28px;
}
.tray .peek {
    width: 10px;
    border-left: 2px solid #5a6070;
}
```
